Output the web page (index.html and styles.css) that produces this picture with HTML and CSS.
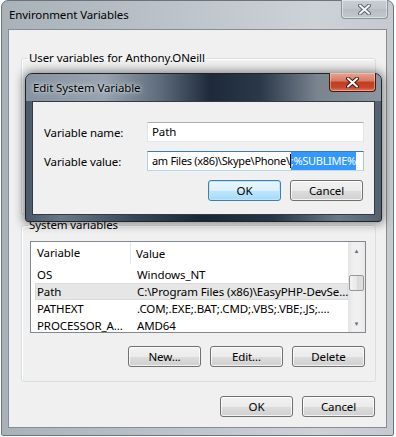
FILE: index.html
```html
<!DOCTYPE html>
<html>
<head>
  <title>Environment Variables</title>
  <link rel="stylesheet" href="styles.css">
</head>
<body>
  <div class="window">
    <div class="titlebar">
      <span class="title">Environment Variables</span>
      <div class="close-btn inactive">
        <svg width="13" height="11" viewBox="0 0 13 11">
          <path d="M2 1.5 L11 9.5 M11 1.5 L2 9.5" stroke="#5d646b" stroke-width="4" stroke-linecap="round"/>
          <path d="M2 1.5 L11 9.5 M11 1.5 L2 9.5" stroke="#f4f5f6" stroke-width="2" stroke-linecap="round"/>
        </svg>
      </div>
    </div>

    <div class="client">
      <fieldset class="group user-group">
        <legend>User variables for Anthony.ONeill</legend>
      </fieldset>

      <fieldset class="group">
        <legend>System variables</legend>
        <div class="listview">
          <div class="list-main">
            <div class="list-header">
              <div class="col col-name">Variable</div>
              <div class="col col-value">Value</div>
            </div>
            <div class="list-rows">
              <div class="row">
                <div class="col col-name">OS</div>
                <div class="col col-value">Windows_NT</div>
              </div>
              <div class="row selected">
                <div class="col col-name">Path</div>
                <div class="col col-value">C:\Program Files (x86)\EasyPHP-DevSe…</div>
              </div>
              <div class="row">
                <div class="col col-name">PATHEXT</div>
                <div class="col col-value">.COM;.EXE;.BAT;.CMD;.VBS;.VBE;.JS;.…</div>
              </div>
              <div class="row">
                <div class="col col-name">PROCESSOR_A…</div>
                <div class="col col-value">AMD64</div>
              </div>
            </div>
          </div>
          <div class="scrollbar">
            <div class="sb-arrow">&#9650;</div>
            <div class="sb-track"><div class="sb-thumb"></div></div>
            <div class="sb-arrow">&#9660;</div>
          </div>
        </div>
        <div class="button-row group-buttons">
          <button>New...</button>
          <button>Edit...</button>
          <button>Delete</button>
        </div>
      </fieldset>

      <div class="button-row window-buttons">
        <button>OK</button>
        <button>Cancel</button>
      </div>
    </div>

    <div class="dialog">
      <div class="titlebar dialog-titlebar">
        <span class="title">Edit System Variable</span>
        <div class="close-btn active">
          <svg width="13" height="11" viewBox="0 0 13 11">
            <path d="M2 1.5 L11 9.5 M11 1.5 L2 9.5" stroke="#4a1a12" stroke-width="4" stroke-linecap="round"/>
            <path d="M2 1.5 L11 9.5 M11 1.5 L2 9.5" stroke="#ffffff" stroke-width="2" stroke-linecap="round"/>
          </svg>
        </div>
      </div>
      <div class="dialog-client">
        <div class="form-row">
          <label class="form-label">Variable name:</label>
          <div class="textbox">Path</div>
        </div>
        <div class="form-row">
          <label class="form-label">Variable value:</label>
          <div class="textbox focused">
            <span class="textbox-text">am Files (x86)\Skype\Phone\</span><span class="caret"></span><span class="selection">;%SUBLIME%</span>
          </div>
        </div>
        <div class="button-row dialog-buttons">
          <button class="default">OK</button>
          <button>Cancel</button>
        </div>
      </div>
    </div>
  </div>
</body>
</html>
```

FILE: styles.css
```css
body {
  margin: 0;
  background-color: #ffffff;
  font-family: "Noto Sans", sans-serif;
  font-size: 11.5px;
  letter-spacing: -0.1px;
  color: #000000;
}

.window {
  position: relative;
  margin-left: 1px;
  width: 393px;
  height: 436px;
  box-sizing: border-box;
  border: 1px solid #6c737b;
  border-radius: 7px 7px 2px 2px;
  background: linear-gradient(90deg, #a9b1b9, #bcc3ca 45%, #cdd2d7 80%, #c4cad0);
  padding: 0 6px 7px;
  display: flex;
  flex-direction: column;
}
.titlebar {
  height: 28px;
  display: flex;
  align-items: center;
  padding-left: 1px;
}
.title {
  line-height: 16px;
}
.close-btn {
  position: absolute;
  top: -1px;
  right: 5px;
  width: 47px;
  height: 19px;
  box-sizing: border-box;
  border-radius: 0 0 4px 4px;
  display: flex;
  align-items: center;
  justify-content: center;
}
.close-btn.inactive {
  border: 1px solid #8b939b;
  border-top: none;
  background: linear-gradient(#c9ced3, #bfc5cb 50%, #b6bcc2 51%, #c3c8cd);
  box-shadow: inset 0 0 0 1px rgba(255,255,255,0.45);
}
.close-btn.active {
  border: 1px solid #4a1710;
  border-top: none;
  background: linear-gradient(#e6a493, #d57a64 45%, #c13c22 50%, #c8462b 80%, #e07b5d);
  box-shadow: inset 0 0 0 1px rgba(255,220,200,0.45);
}

.client {
  flex: 1;
  background-color: #f0f0f0;
  border: 1px solid #858c93;
  display: flex;
  flex-direction: column;
}

.group {
  margin: 0 10px 0 12px;
  padding: 0 9px 14px 8px;
  border: 1px solid #d5dfe5;
  border-radius: 3px;
  min-width: 0;
  box-shadow: inset 1px 1px 0 #ffffff;
}
.group legend {
  margin-left: -2px;
  padding: 0 1px;
  line-height: 16px;
}
.user-group {
  margin-top: 20px;
  height: 165px;
  box-sizing: border-box;
  margin-bottom: 2px;
}

.listview {
  margin-top: 8px;
  height: 92px;
  box-sizing: border-box;
  border: 1px solid #828790;
  background-color: #ffffff;
  display: flex;
  overflow: hidden;
}
.list-main {
  flex: 1;
  min-width: 0;
}
.list-header {
  height: 22px;
  display: flex;
  align-items: center;
}
.list-header .col-name {
  width: 100px;
  padding-left: 6px;
  border-right: 1px solid #e5e5e5;
  height: 22px;
  line-height: 22px;
}
.list-header .col-value {
  padding-left: 5px;
}
.list-rows {
  padding-top: 2px;
}
.row {
  display: flex;
  height: 17px;
  line-height: 17px;
  margin-left: 4px;
}
.row.selected {
  background-color: #e6e6e6;
  box-shadow: inset 0 0 0 1px #dadada;
}
.col {
  box-sizing: border-box;
  white-space: nowrap;
  overflow: hidden;
}
.row .col-name {
  width: 96px;
  padding-left: 2px;
}
.row .col-value {
  flex: 1;
  padding-left: 6px;
}

.scrollbar {
  width: 17px;
  display: flex;
  flex-direction: column;
  background: linear-gradient(90deg, #e3e3e3, #f0f0f0 30%, #f0f0f0 70%, #e8e8e8);
}
.sb-arrow {
  height: 17px;
  font-size: 6px;
  color: #6e6e6e;
  display: flex;
  align-items: center;
  justify-content: center;
}
.sb-track {
  flex: 1;
  padding-top: 16px;
}
.sb-thumb {
  margin: 0 1px;
  height: 16px;
  box-sizing: border-box;
  border: 1px solid #979797;
  border-radius: 2px;
  background: linear-gradient(90deg, #f3f3f3, #e8e8e8 50%, #d9d9d9 51%, #e0e0e0);
}

.button-row {
  display: flex;
  justify-content: flex-end;
  gap: 9px;
}
button {
  width: 73px;
  height: 21px;
  padding: 0;
  font-family: inherit;
  font-size: 11.5px;
  letter-spacing: -0.1px;
  color: #000000;
  border: 1px solid #707070;
  border-radius: 3px;
  background: linear-gradient(#f2f2f2, #ebebeb 50%, #dddddd 51%, #cfcfcf);
  box-shadow: inset 0 0 0 1px rgba(255,255,255,0.75);
}
button.default {
  border-color: #3c7fb1;
  background: linear-gradient(#eaf6fd, #d9f0fc 50%, #bee6fd 51%, #a7d9f5);
  box-shadow: inset 0 0 0 1px #bfe4f7;
}
.group-buttons {
  margin-top: 13px;
  margin-right: 1px;
}
.window-buttons {
  margin-top: 14px;
  margin-right: 11px;
}

.dialog {
  position: absolute;
  left: 23px;
  top: 72px;
  width: 357px;
  height: 149px;
  box-sizing: border-box;
  border: 1px solid #1b2530;
  border-radius: 7px 7px 3px 3px;
  padding: 0 6px 6px;
  display: flex;
  flex-direction: column;
  background: linear-gradient(90deg, #4b5866, #6c7886 10%, #3a4756 30%, #1b2634 50%, #2a3645 70%, #6d7885 88%, #56616d);
  box-shadow: 0 0 10px 2px rgba(0,0,0,0.45);
}
.dialog-titlebar {
  height: 27px;
  margin: 0 -6px;
  padding-left: 7px;
  border-radius: 6px 6px 0 0;
  background: linear-gradient(90deg, #8793a0, #98a3ae 22%, #5d6a79 38%, #1e2a39 52%, #2b3848 66%, #79848f 82%, #8c96a1);
}
.dialog-titlebar .title {
  text-shadow: 0 0 6px rgba(230,236,242,0.9), 0 0 3px rgba(230,236,242,0.9);
}
.dialog-client {
  flex: 1;
  background-color: #f0f0f0;
  border: 1px solid #2f3b48;
  padding: 20px 10px 8px 11px;
}
.form-row {
  display: flex;
  align-items: center;
  margin-bottom: 9px;
}
.form-label {
  flex: none;
  width: 103px;
}
.textbox {
  flex: 1;
  min-width: 0;
  height: 20px;
  box-sizing: border-box;
  border: 1px solid #abadb3;
  border-color: #abadb3 #e2e3ea #e3e9ef #e2e3ea;
  background-color: #ffffff;
  padding: 0 4px;
  line-height: 18px;
  display: flex;
  white-space: nowrap;
  overflow: hidden;
}
.textbox.focused {
  border-color: #3d7bad #a4c9e3 #b7d9ed #b5cfe7;
  font-size: 11px;
  letter-spacing: -0.3px;
}
.caret {
  flex: none;
  width: 1px;
  height: 14px;
  margin-top: 2px;
  background-color: #000000;
}
.selection {
  flex: none;
  background-color: #3399ff;
  color: #ffffff;
}
.textbox-text {
  flex: none;
}
.dialog-buttons {
  margin-top: 4px;
  margin-right: 1px;
}
```
